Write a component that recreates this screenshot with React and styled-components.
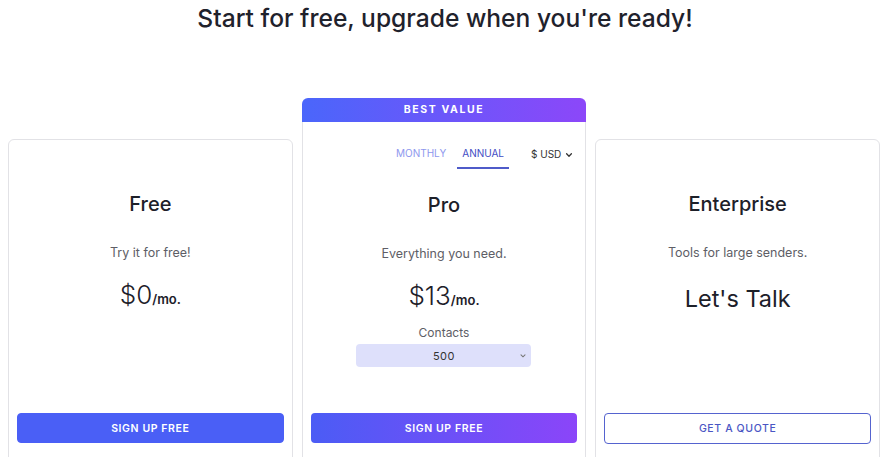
import React from "react";
import styled, { createGlobalStyle } from "styled-components";

const GlobalStyle = createGlobalStyle`
  body {
    margin: 0;
    background: #fff;
    font-family: Inter, "Noto Sans", sans-serif;
    color: #1d2029;
    overflow: hidden;
  }
`;

const plans = [
  {
    name: "Free",
    tagline: "Try it for free!",
    price: "$0",
    cta: "SIGN UP FREE",
    variant: "solid",
  },
  {
    name: "Pro",
    tagline: "Everything you need.",
    price: "$13",
    cta: "SIGN UP FREE",
    variant: "gradient",
    featured: true,
  },
  {
    name: "Enterprise",
    tagline: "Tools for large senders.",
    talk: "Let's Talk",
    cta: "GET A QUOTE",
    variant: "outline",
  },
];

const Pricing = () => (
  <Page>
    <GlobalStyle />
    <Title>Start for free, upgrade when you're ready!</Title>
    <Plans>
      {plans.map(plan => (
        <PlanColumn key={plan.name}>
          {plan.featured && <Banner>BEST VALUE</Banner>}
          <Card featured={plan.featured}>
            {plan.featured && (
              <Toolbar>
                <Tab>MONTHLY</Tab>
                <Tab active>ANNUAL</Tab>
                <Currency>
                  $ USD
                  <svg width="8" height="8" viewBox="0 0 10 10">
                    <path
                      d="M2 3.5l3 3 3-3"
                      fill="none"
                      stroke="#333"
                      strokeWidth="1.6"
                      strokeLinecap="round"
                      strokeLinejoin="round"
                    />
                  </svg>
                </Currency>
              </Toolbar>
            )}
            <PlanName>{plan.name}</PlanName>
            <Tagline>{plan.tagline}</Tagline>
            {plan.price ? (
              <Price>
                {plan.price}
                <Per>/mo.</Per>
              </Price>
            ) : (
              <Talk>{plan.talk}</Talk>
            )}
            {plan.featured && (
              <>
                <ContactsLabel>Contacts</ContactsLabel>
                <ContactsSelect>
                  500
                  <SelectChevron width="8" height="8" viewBox="0 0 10 10">
                    <path
                      d="M2.5 3.5l2.5 2.5 2.5-2.5"
                      fill="none"
                      stroke="#777"
                      strokeWidth="1.3"
                      strokeLinecap="round"
                    />
                  </SelectChevron>
                </ContactsSelect>
              </>
            )}
            <Button variant={plan.variant}>{plan.cta}</Button>
          </Card>
        </PlanColumn>
      ))}
    </Plans>
  </Page>
);

const Page = styled.div`
  width: 890px;
`;

const Title = styled.h1`
  margin: 0;
  text-align: center;
  font-size: 24.6px;
  line-height: 36px;
  font-weight: 500;
  color: #1f222c;
`;

const Plans = styled.div`
  margin-top: 62px;
  padding: 0 10px 0 8px;
  display: grid;
  grid-template-columns: repeat(3, 1fr);
  column-gap: 9px;
  align-items: end;
`;

const PlanColumn = styled.div`
  display: flex;
  flex-direction: column;
`;

const Banner = styled.div`
  height: 24px;
  border-radius: 6px 6px 0 0;
  background: linear-gradient(90deg, #4a66fb 0%, #8c47f9 100%);
  color: #fff;
  font-size: 10.5px;
  font-weight: 700;
  letter-spacing: 1.6px;
  line-height: 24px;
  text-align: center;
`;

const Card = styled.div`
  height: ${p => (p.featured ? 348 : 331)}px;
  box-sizing: border-box;
  border: 1px solid #e2e2e6;
  border-top: ${p => (p.featured ? "none" : "1px solid #e2e2e6")};
  border-radius: ${p => (p.featured ? "0 0 6px 6px" : "6px")};
  padding: ${p => (p.featured ? "18px 8px 26px" : "52px 8px 26px")};
  display: flex;
  flex-direction: column;
  align-items: center;
`;

const Toolbar = styled.div`
  align-self: stretch;
  display: flex;
  justify-content: flex-end;
  align-items: center;
  gap: 6px;
  padding-right: 4px;
  height: 29px;
  margin-bottom: 24px;
`;

const Tab = styled.div`
  font-size: 10px;
  padding: 0 5px;
  height: 29px;
  line-height: 27px;
  box-sizing: border-box;
  color: ${p => (p.active ? "#3f4bc4" : "#8e97ee")};
  border-bottom: 2px solid ${p => (p.active ? "#4f5bc9" : "transparent")};
`;

const Currency = styled.div`
  margin-left: 16px;
  font-size: 10px;
  color: #333;
  display: flex;
  align-items: center;
  gap: 4px;
  line-height: 29px;
`;

const PlanName = styled.div`
  font-size: 20px;
  font-weight: 500;
  line-height: 24px;
  color: #1d2029;
`;

const Tagline = styled.div`
  margin-top: 29px;
  font-size: 12.5px;
  line-height: 16px;
  color: #5e5e66;
`;

const Price = styled.div`
  margin-top: 19px;
  font-size: 26px;
  font-weight: 300;
  line-height: 30px;
  color: #1d2029;
`;

const Per = styled.span`
  font-size: 13px;
  font-weight: 600;
`;

const Talk = styled.div`
  margin-top: 23px;
  font-size: 23.5px;
  font-weight: 400;
  line-height: 30px;
  color: #1d2029;
`;

const ContactsLabel = styled.div`
  margin-top: 10px;
  font-size: 12px;
  line-height: 16px;
  color: #5e5e66;
`;

const ContactsSelect = styled.div`
  position: relative;
  margin-top: 3px;
  width: 175px;
  height: 23px;
  border-radius: 4px;
  background: #dee0fb;
  font-size: 11px;
  letter-spacing: 0.5px;
  color: #333;
  display: flex;
  align-items: center;
  justify-content: center;
`;

const SelectChevron = styled.svg`
  position: absolute;
  right: 4px;
  top: 8px;
`;

const buttonLook = {
  solid: "background: #4a5ff6; color: #fff; border: 1px solid #4a5ff6;",
  gradient:
    "background: linear-gradient(90deg, #4b5cf5 0%, #8b45f9 100%); color: #fff; border: none;",
  outline:
    "background: #fff; color: #4a56c4; border: 1px solid #5563cf; margin-bottom: -1px;",
};

const Button = styled.div`
  margin-top: auto;
  align-self: stretch;
  box-sizing: border-box;
  height: ${p => (p.variant === "outline" ? 31 : 30)}px;
  border-radius: 4px;
  display: flex;
  align-items: center;
  justify-content: center;
  font-size: 10.5px;
  font-weight: ${p => (p.variant === "outline" ? 500 : 600)};
  letter-spacing: 0.6px;
  ${p => buttonLook[p.variant]}
`;

export default Pricing;
